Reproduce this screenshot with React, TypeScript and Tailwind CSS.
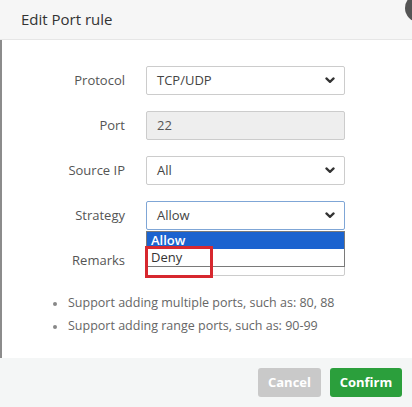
import React from 'react'

const FONT = { fontFamily: '"Open Sans", "Noto Sans", sans-serif' }

function Chevron() {
  return (
    <svg width="10" height="7" viewBox="0 0 10 7" className="shrink-0">
      <path d="M1.4 1.4 L5 4.9 L8.6 1.4" fill="none" stroke="#333" strokeWidth="2.2" strokeLinecap="round" strokeLinejoin="round" />
    </svg>
  )
}

function Select({ value, focused }: { value: string; focused?: boolean }) {
  return (
    <div
      className={`w-[199px] h-[29px] flex items-center justify-between pl-[10px] pr-[9px] rounded-[2px] bg-white border ${
        focused ? 'border-[#7fa6d6]' : 'border-[#cccccc]'
      }`}
    >
      <span className="text-[13px] text-[#444]">{value}</span>
      <Chevron />
    </div>
  )
}

function Row({ label, children }: { label: string; children: React.ReactNode }) {
  return (
    <div className="flex items-center h-[29px]">
      <div className="w-[123px] text-right text-[13px] text-[#555]">{label}</div>
      <div className="ml-[21px]">{children}</div>
    </div>
  )
}

export default function App() {
  return (
    <div className="relative w-[412px] h-[407px] overflow-hidden bg-white flex flex-col" style={FONT}>
      {/* header */}
      <div className="h-[40px] shrink-0 flex items-center px-[21px] bg-[#f6f6f6] border-b border-[#e6e6e6]">
        <span className="text-[15px] text-[#333]">Edit Port rule</span>
      </div>
      <div className="absolute -top-[6px] left-[405px] w-[28px] h-[28px] rounded-full bg-[#555]" />

      {/* body */}
      <div className="flex-1 border-l-2 border-[#8c8c8c] flex flex-col">
        <div className="relative flex flex-col gap-[16px] pt-[26px]">
          <Row label="Protocol">
            <Select value="TCP/UDP" />
          </Row>
          <Row label="Port">
            <div className="w-[199px] h-[29px] flex items-center pl-[10px] rounded-[2px] bg-[#eeeeee] border border-[#cccccc]">
              <span className="text-[13px] text-[#555]">22</span>
            </div>
          </Row>
          <Row label="Source IP">
            <Select value="All" />
          </Row>
          <Row label="Strategy">
            <div className="relative">
              <Select value="Allow" focused />
              {/* native dropdown list */}
              <div className="absolute left-0 top-[30px] w-[199px] bg-white border border-[#7a7a7a] z-10 text-[13px] leading-[17px]">
                <div className="h-[17px] pl-[4px] bg-[#1b63cf] text-white font-semibold">Allow</div>
                <div className="h-[17px] pl-[4px] text-[#333]">Deny</div>
              </div>
              <div className="absolute left-[-1px] top-[45px] w-[68px] h-[32px] border-[3px] border-[#d7282f] z-20" />
            </div>
          </Row>
          <Row label="Remarks">
            <div className="w-[199px] h-[29px] mt-[2px] rounded-[2px] bg-white border border-[#cccccc]" />
          </Row>
        </div>

        <ul className="mt-[20px] pl-[51px] flex flex-col gap-[6px] text-[12.5px] text-[#666]">
          <li className="flex items-center h-[17px]">
            <span className="w-[4px] h-[4px] rounded-full bg-[#888] mr-[11px]" />
            Support adding multiple ports, such as: 80, 88
          </li>
          <li className="flex items-center h-[17px]">
            <span className="w-[4px] h-[4px] rounded-full bg-[#888] mr-[11px]" />
            Support adding range ports, such as: 90-99
          </li>
        </ul>
      </div>

      {/* footer */}
      <div className="h-[49px] shrink-0 flex items-center justify-end gap-[9px] pr-[10px] bg-[#f4f6f6]">
        <button className="w-[63px] h-[29px] rounded-[3px] bg-[#c9c9c9] text-white text-[13px] font-bold">Cancel</button>
        <button className="w-[72px] h-[29px] rounded-[3px] bg-[#2b9f3c] text-white text-[13px] font-bold">Confirm</button>
      </div>
    </div>
  )
}
